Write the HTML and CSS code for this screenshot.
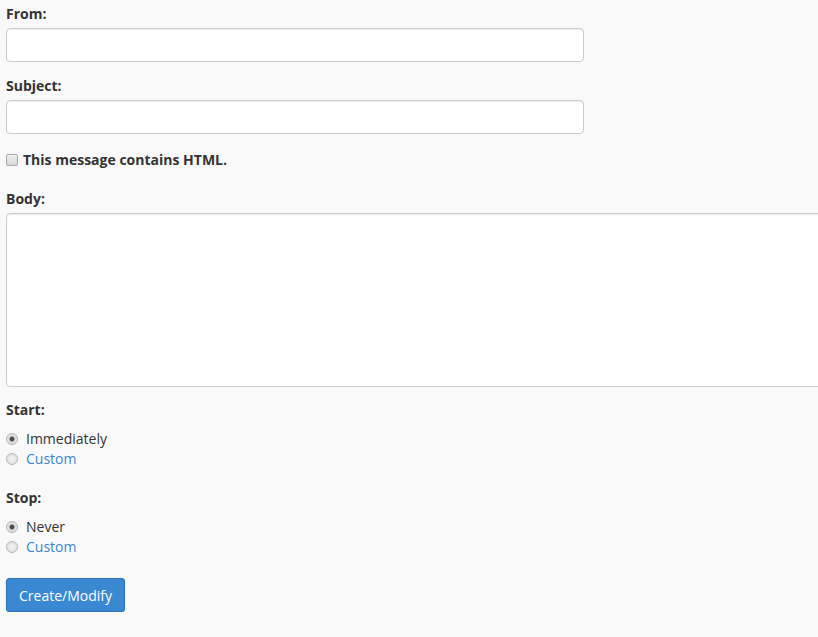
FILE: index.html
```html
<!DOCTYPE html>
<html>
<head>
<meta charset="utf-8">
<link rel="stylesheet" href="styles.css">
</head>
<body>
<form class="form">
  <div class="group">
    <label class="label label-field" for="from">From:</label>
    <input class="input" id="from" type="text">
  </div>
  <div class="group">
    <label class="label label-field" for="subject">Subject:</label>
    <input class="input" id="subject" type="text">
  </div>
  <div class="check-row">
    <input class="check" id="html" type="checkbox">
    <label class="check-label" for="html">This message contains HTML.</label>
  </div>
  <div class="group group-body">
    <label class="label label-field" for="body">Body:</label>
    <textarea class="textarea" id="body"></textarea>
  </div>
  <div class="group group-start">
    <div class="label">Start:</div>
    <div class="radios">
      <label class="radio-row"><input class="radio" type="radio" name="start" checked><span>Immediately</span></label>
      <label class="radio-row"><input class="radio" type="radio" name="start"><span class="link">Custom</span></label>
    </div>
  </div>
  <div class="group group-stop">
    <div class="label">Stop:</div>
    <div class="radios">
      <label class="radio-row"><input class="radio" type="radio" name="stop" checked><span>Never</span></label>
      <label class="radio-row"><input class="radio" type="radio" name="stop"><span class="link">Custom</span></label>
    </div>
  </div>
  <button class="btn" type="button">Create/Modify</button>
</form>
</body>
</html>
```
FILE: styles.css
```css
html, body {
  margin: 0;
  padding: 0;
  background: #f9f9f9;
  overflow: hidden;
}
body {
  font-family: "Open Sans", "Liberation Sans", sans-serif;
  font-size: 14px;
  line-height: 20px;
  color: #333;
}
.form {
  padding: 3px 6px 0 6px;
  display: flex;
  flex-direction: column;
  align-items: flex-start;
}
.group {
  display: flex;
  flex-direction: column;
  align-items: flex-start;
  margin-bottom: 13px;
}
.label {
  display: block;
  font-weight: 700;
  height: 20px;
  margin-bottom: 5px;
}
.label-field {
  box-sizing: border-box;
  padding-top: 1px;
}
.input {
  box-sizing: border-box;
  width: 578px;
  height: 34px;
  margin: 0;
  border: 1px solid #ccc;
  border-radius: 4px;
  background: #fff;
  box-shadow: inset 0 1px 1px rgba(0,0,0,0.075);
}
.check-row {
  display: flex;
  align-items: center;
  height: 20px;
  margin: 3px 0 18px 0;
}
.check {
  appearance: none;
  -webkit-appearance: none;
  box-sizing: border-box;
  width: 12px;
  height: 12px;
  margin: 0 5px 0 0;
  border: 1px solid #aaa;
  border-radius: 2px;
  background: linear-gradient(#eee, #d8d8d8);
}
.check-label {
  font-weight: 700;
}
.group-body {
  margin-bottom: 13px;
}
.textarea {
  box-sizing: border-box;
  width: 900px;
  height: 174px;
  margin: 0;
  border: 1px solid #ccc;
  border-radius: 4px;
  background: #fff;
  resize: none;
  box-shadow: inset 0 1px 1px rgba(0,0,0,0.075);
}
.group-start .label,
.group-stop .label {
  margin-bottom: 9px;
}
.group-start {
  margin-bottom: 19px;
}
.group-stop {
  margin-bottom: 21px;
}
.radios {
  display: flex;
  flex-direction: column;
}
.radio-row {
  display: flex;
  align-items: center;
  height: 20px;
}
.radio {
  appearance: none;
  -webkit-appearance: none;
  box-sizing: border-box;
  width: 12px;
  height: 12px;
  margin: 0 8px 0 0;
  border: 1px solid #b5b5b5;
  border-radius: 50%;
  background: radial-gradient(circle, #f2f2f2 0, #dcdcdc 100%);
}
.radio:checked {
  background: radial-gradient(circle, #444 0, #555 2px, #ddd 3px, #e6e6e6 100%);
}
.link {
  color: #3a87d1;
}
.btn {
  box-sizing: border-box;
  height: 34px;
  padding: 0 12px;
  border: 1px solid #2f73b5;
  border-radius: 3px;
  background: #3a87d2;
  color: #fff;
  font-family: "Open Sans", "Liberation Sans", sans-serif;
  font-size: 14px;
  box-shadow: 0 1px 2px rgba(0,0,0,0.15);
}
```
